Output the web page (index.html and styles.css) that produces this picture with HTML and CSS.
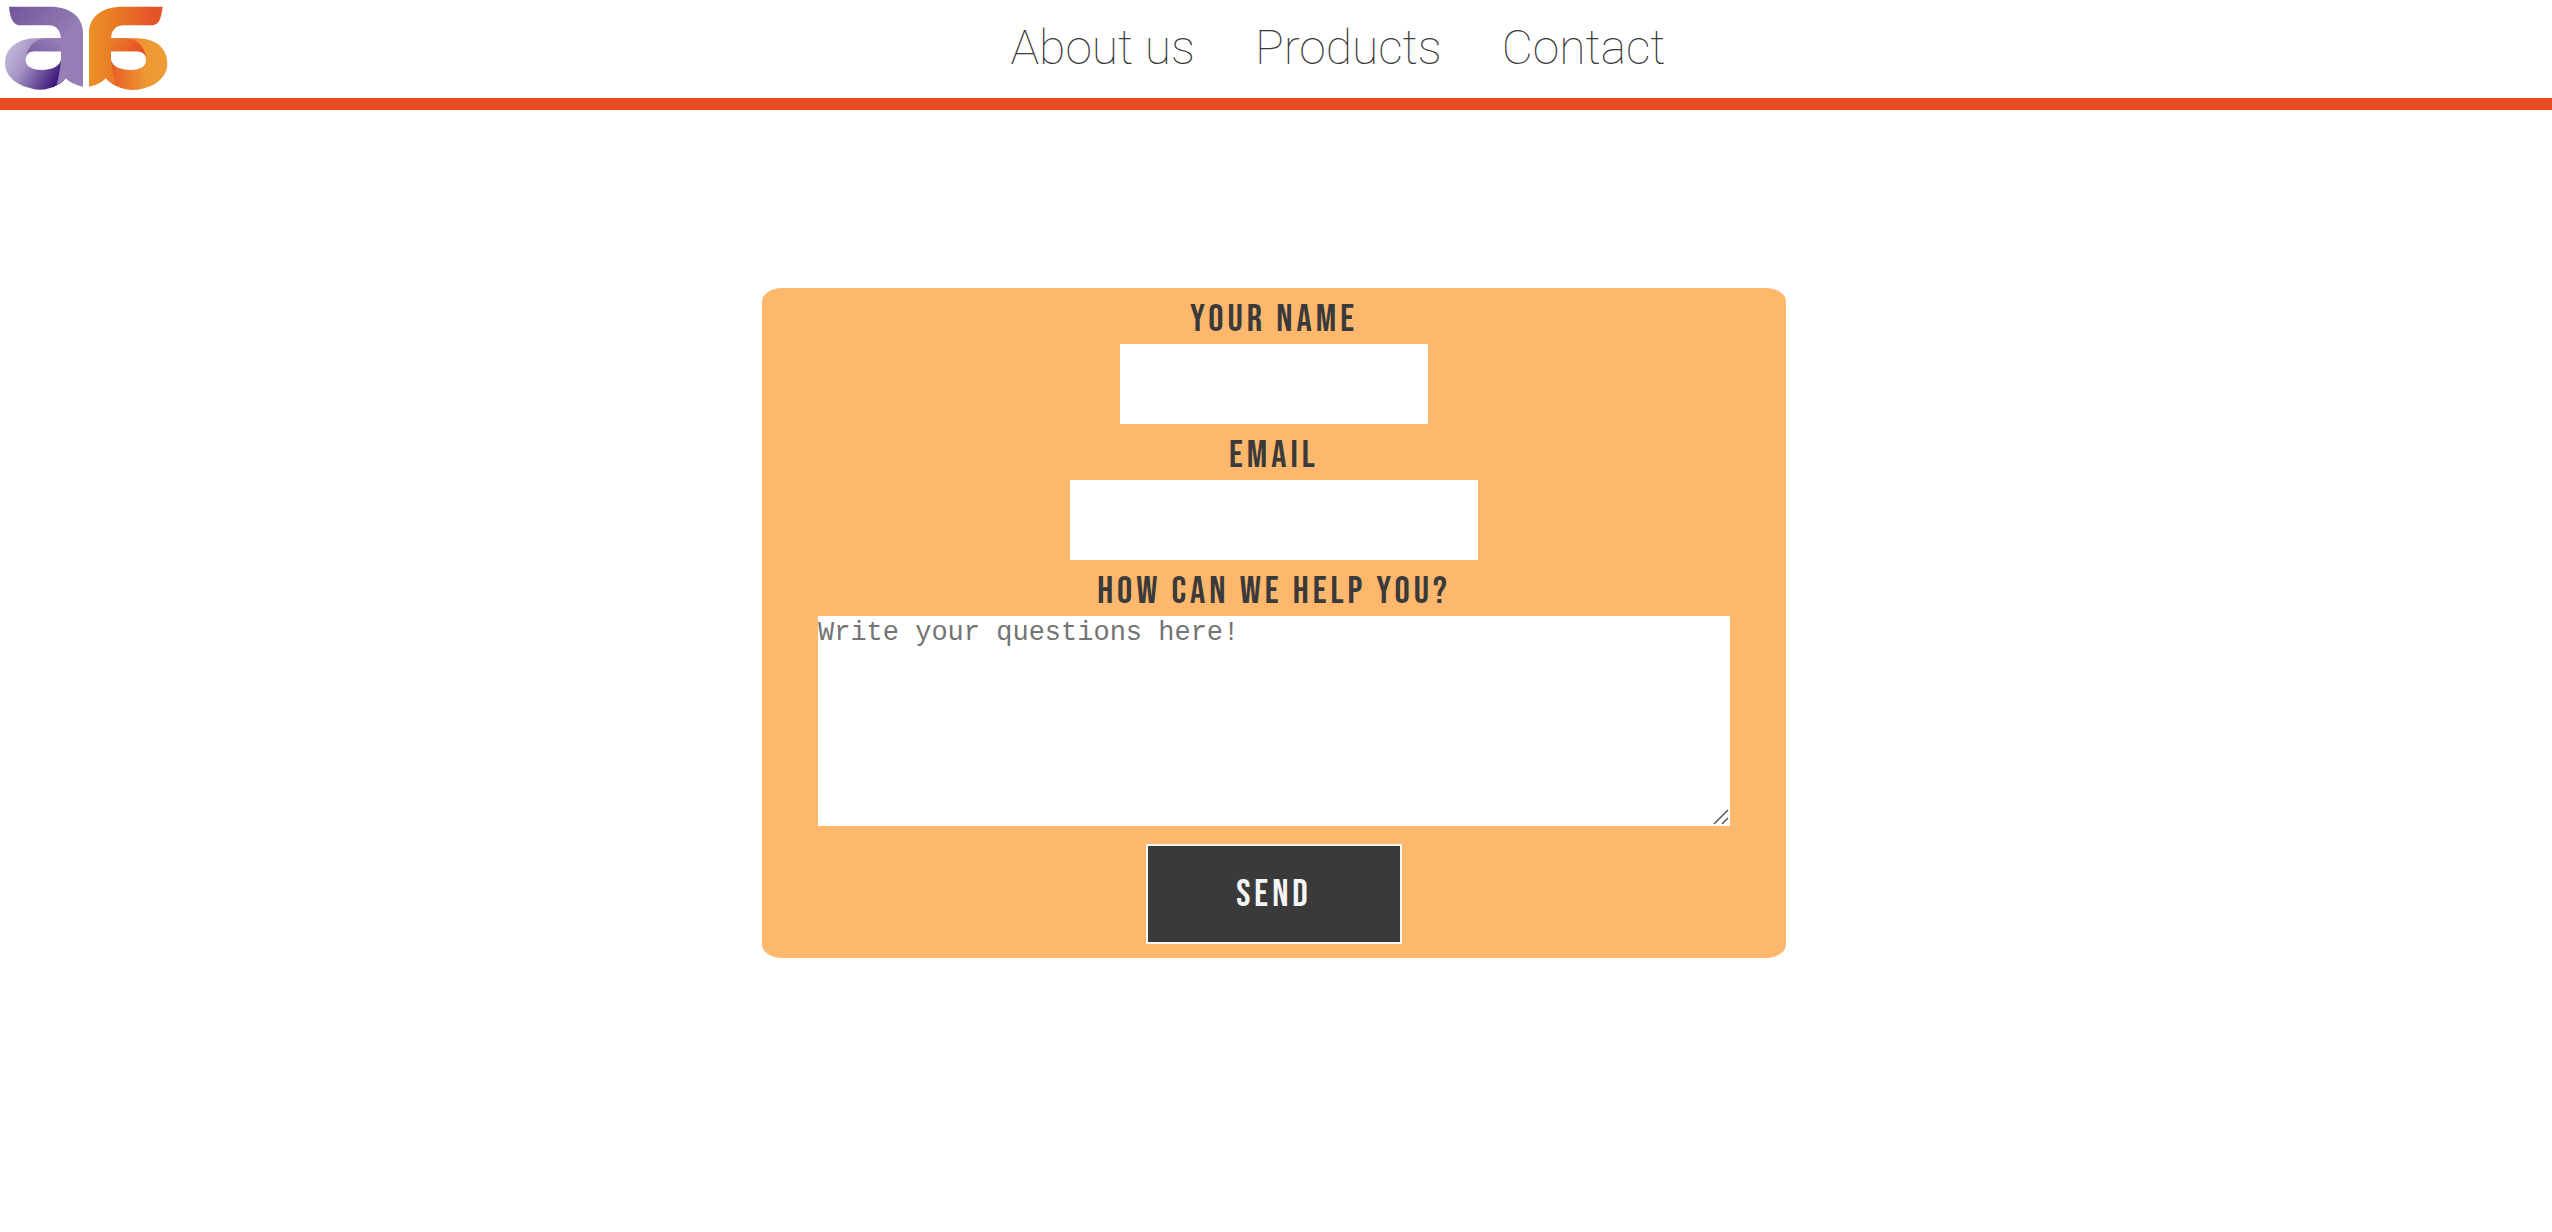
FILE: index.html
```html
<!DOCTYPE html>
<html lang="en">
<head>
  <meta charset="utf-8">
  <meta name="viewport" content="width=device-width, initial-scale=1">
  <title>Contact</title>
  <link rel="stylesheet" href="styles.css">
</head>
<body>
  <header class="site-header">
    <a class="logo" href="#" aria-label="Home">
      <svg class="logo-mark" viewBox="0 0 540 294" aria-hidden="true">
        <defs>
          <linearGradient id="violet" x1="0" y1="0" x2="1" y2="1">
            <stop offset="0" stop-color="#71559b"/>
            <stop offset=".6" stop-color="#967fb6"/>
            <stop offset="1" stop-color="#957db5"/>
          </linearGradient>
          <linearGradient id="violet-bowl" x1="0" y1="0" x2="1" y2=".45">
            <stop offset=".2" stop-color="#bcb0d3"/>
            <stop offset=".45" stop-color="#a595c4"/>
            <stop offset="1" stop-color="#401b7e"/>
          </linearGradient>
          <linearGradient id="violet-fold" x1="0" y1="1" x2="1" y2="0">
            <stop offset="0" stop-color="#765da2"/>
            <stop offset="1" stop-color="#9983b9"/>
          </linearGradient>
          <linearGradient id="orange" x1="0" y1="0" x2="1" y2="0">
            <stop offset="0" stop-color="#eb9026"/>
            <stop offset=".4" stop-color="#e97825"/>
            <stop offset=".85" stop-color="#e55427"/>
          </linearGradient>
          <linearGradient id="orange-bowl" x1="0" y1="0" x2="1" y2="0">
            <stop offset="0" stop-color="#e75425"/>
            <stop offset=".65" stop-color="#ee9833"/>
            <stop offset="1" stop-color="#ee9d37"/>
          </linearGradient>
          <linearGradient id="orange-fold" x1="0" y1="0" x2="1" y2=".4">
            <stop offset="0" stop-color="#e98028"/>
            <stop offset="1" stop-color="#e64f25"/>
          </linearGradient>
        </defs>
        <path fill="url(#violet-bowl)" fill-rule="evenodd" d="M183 115H105C45 117 15 150 15 190C15 228 50 256 92 265Q120 274 148 265Q180 257 197 235L183 195ZM183 154V180C178 200 155 210 125 210C93 210 77 197 77 181C77 166 86 154 104 154Z"/>
        <path fill="url(#violet-fold)" d="M183 115H132C105 119 86 137 79 165Q85 154 104 154H183Z"/>
        <path fill="url(#violet)" d="M27 20H150C210 20 249 50 249 98V260Q215 254 197 235Q187 249 170 254Q179 222 183 180V115C181 89 167 76 145 76H65C40 76 31 60 27 20Z"/>
        <path fill="url(#orange-bowl)" fill-rule="evenodd" d="M333 115H412C470 116 502 146 502 192C502 229 468 258 427 266Q397 275 365 265Q333 255 318 235L333 180ZM333 154V180C338 200 361 210 392 210C423 210 438 198 438 181C438 165 428 154 411 154Z"/>
        <path fill="url(#orange-fold)" d="M333 115H383C411 119 431 138 438 168Q429 154 411 154H333Z"/>
        <path fill="url(#orange)" d="M488 20H368C306 20 267 50 267 98V260Q298 255 318 235Q330 248 348 255Q336 221 333 180V115C335 90 348 76 372 76H449C476 76 482 64 488 20Z"/>
      </svg>
    </a>
    <nav class="main-nav">
      <a href="#">About us</a>
      <a href="#">Products</a>
      <a href="#">Contact</a>
    </nav>
  </header>

  <main class="page">
    <form class="contact-form">
      <label for="name">YOUR NAME</label>
      <input class="field field-name" type="text" id="name" name="name">
      <label for="email">EMAIL</label>
      <input class="field field-email" type="email" id="email" name="email">
      <label for="message">HOW CAN WE HELP YOU?</label>
      <textarea class="message" id="message" name="message" placeholder="Write your questions here!"></textarea>
      <button class="send" type="submit">SEND</button>
    </form>
  </main>
</body>
</html>
```
FILE: styles.css
```css
* {
  box-sizing: border-box;
}

body {
  margin: 0;
  background: #fff;
  color: #3a3a3a;
  font-family: Roboto, sans-serif;
}

.site-header {
  display: flex;
  align-items: center;
  border-bottom: 12px solid #eb4a23;
}

.logo,
.logo-mark {
  display: block;
}

.logo-mark {
  width: 180px;
  height: 98px;
}

.main-nav {
  flex: 1;
  display: flex;
  justify-content: center;
  gap: 60px;
  padding: 0 56px 2px 0;
}

.main-nav a {
  color: inherit;
  font-size: 48px;
  font-weight: 100;
  line-height: 56px;
  text-decoration: none;
}

.page {
  padding: 178px 4px 0 0;
}

.contact-form {
  display: flex;
  flex-direction: column;
  align-items: center;
  width: 1024px;
  max-width: 100%;
  margin: 0 auto;
  padding: 0 56px 14px;
  border-radius: 2%;
  background: #fdb86d;
}

.contact-form label,
.send {
  font-family: "Bebas Neue", "Liberation Sans Narrow", "Arial Narrow", sans-serif;
  font-size: 38px;
  font-weight: 400;
  letter-spacing: 4px;
}

.contact-form label {
  padding-top: 8px;
  line-height: 48px;
}

.field {
  height: 80px;
  max-width: 100%;
  padding: 0 8px;
  border: 0;
  background: #fff;
  font-size: 27px;
}

.field-name {
  width: 308px;
}

.field-email {
  width: 408px;
}

.message {
  width: 100%;
  height: 210px;
  padding: 2px 0;
  border: 0;
  background: #fff url("data:image/svg+xml,%3Csvg xmlns='http://www.w3.org/2000/svg' width='18' height='18'%3E%3Cpath d='M2 16L16 2M10 16L16 10' stroke='%23555' stroke-width='1.5'/%3E%3C/svg%3E") no-repeat right bottom;
  font-family: "Courier New", "Liberation Mono", monospace;
  font-size: 27px;
  line-height: 30px;
}

.message::placeholder {
  color: #757575;
}

.message::-webkit-resizer {
  background: transparent;
}

.send {
  width: 256px;
  height: 100px;
  margin-top: 18px;
  border: 2px solid #f5f5f5;
  background: #3a3a3a;
  color: #f5f5f5;
}
```
